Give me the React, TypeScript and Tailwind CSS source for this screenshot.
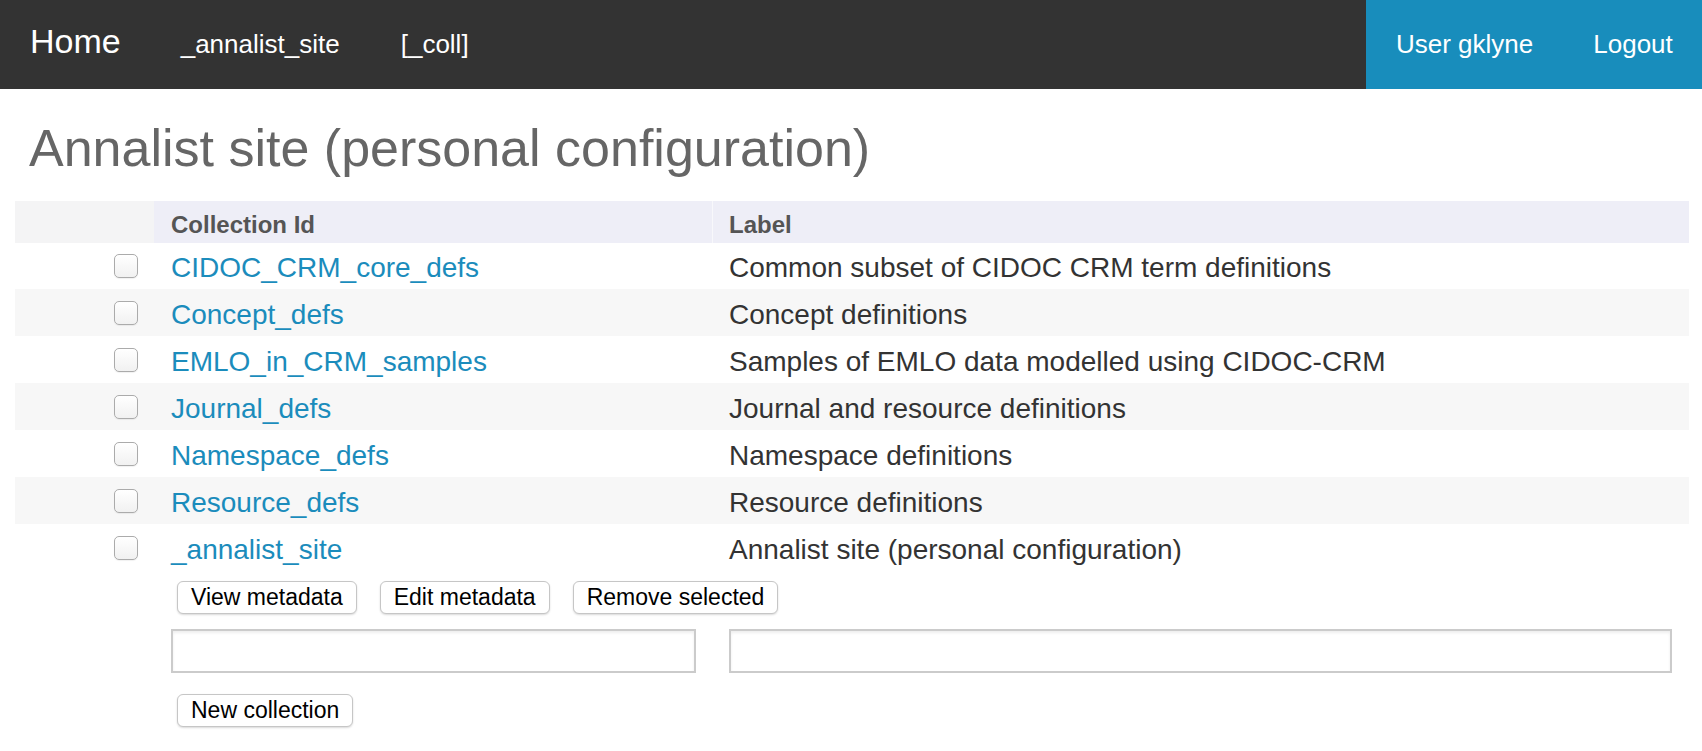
import React from 'react';

const ROWS = [
  { id: 'CIDOC_CRM_core_defs', label: 'Common subset of CIDOC CRM term definitions' },
  { id: 'Concept_defs', label: 'Concept definitions' },
  { id: 'EMLO_in_CRM_samples', label: 'Samples of EMLO data modelled using CIDOC-CRM' },
  { id: 'Journal_defs', label: 'Journal and resource definitions' },
  { id: 'Namespace_defs', label: 'Namespace definitions' },
  { id: 'Resource_defs', label: 'Resource definitions' },
  { id: '_annalist_site', label: 'Annalist site (personal configuration)' },
];

const Button = ({ children }: { children: React.ReactNode }) => (
  <button
    type="button"
    className="h-[33px] rounded-[6px] border border-[#c6c6c6] bg-white px-[13px] text-[23px] leading-none text-black shadow-[0_1px_2px_rgba(0,0,0,0.15)]"
  >
    {children}
  </button>
);

const Checkbox = () => (
  <input
    type="checkbox"
    className="h-[24px] w-[24px] appearance-none rounded-[5px] border border-[#ababab] bg-gradient-to-b from-white to-[#f1f1f1] shadow-[0_1px_1px_rgba(0,0,0,0.06)]"
  />
);

export default function App() {
  return (
    <div className="min-h-screen bg-white font-['Liberation_Sans',Arial,sans-serif]">
      <nav className="flex h-[89px] bg-[#333333]">
        <div className="flex flex-1 items-baseline pl-[30px] pt-[24px] text-white">
          <a className="text-[34px] leading-none">Home</a>
          <a className="ml-[60px] text-[26px] leading-none">_annalist_site</a>
          <a className="ml-[61px] text-[26px] leading-none">[_coll]</a>
        </div>
        <div className="flex w-[336px] items-baseline bg-[#188dbc] pl-[30px] pt-[31px] text-white">
          <a className="text-[26px] leading-none">User gklyne</a>
          <a className="ml-[60px] text-[26px] leading-none">Logout</a>
        </div>
      </nav>

      <h1 className="ml-[29px] mt-[31px] mb-[24px] text-[52px] leading-[1.1] text-[#666666]">
        Annalist site (personal configuration)
      </h1>

      <div className="ml-[15px] mr-[13px]">
        <div className="grid h-[41px] grid-cols-[139px_559px_1fr] text-[24px] font-bold text-[#555555]">
          <div className="bg-[#f4f4f5]" />
          <div className="flex items-center border-r border-[#f8f8fb] bg-[#eeeef7] pl-[17px] pt-[6px]">
            Collection Id
          </div>
          <div className="flex items-center bg-[#eeeef7] pl-[16px] pt-[6px]">Label</div>
        </div>

        {ROWS.map((r, i) => (
          <div
            key={r.id}
            className={`grid h-[47px] grid-cols-[139px_559px_1fr] text-[28px] ${
              i % 2 === 1 ? 'bg-[#f7f7f7]' : 'bg-white'
            }`}
          >
            <div className="flex items-center justify-end pr-[16px]">
              <Checkbox />
            </div>
            <div className="flex items-center pl-[17px] pt-[4px]">
              <a className="leading-none text-[#1b8cbc]">{r.id}</a>
            </div>
            <div className="flex items-center pl-[16px] pt-[4px] leading-none text-[#333333]">
              {r.label}
            </div>
          </div>
        ))}

        <div className="mt-[10px] flex gap-[23px] pl-[162px]">
          <Button>View metadata</Button>
          <Button>Edit metadata</Button>
          <Button>Remove selected</Button>
        </div>

        <div className="mt-[15px] grid grid-cols-[139px_559px_1fr]">
          <div />
          <div className="px-[17px]">
            <input
              type="text"
              className="block h-[44px] w-full border-2 border-[#cbcbcb] bg-white shadow-[inset_0_2px_3px_rgba(0,0,0,0.07)] outline-none"
            />
          </div>
          <div className="pl-[16px] pr-[17px]">
            <input
              type="text"
              className="block h-[44px] w-full border-2 border-[#cbcbcb] bg-white shadow-[inset_0_2px_3px_rgba(0,0,0,0.07)] outline-none"
            />
          </div>
        </div>

        <div className="mt-[21px] pl-[162px] pb-[25px]">
          <Button>New collection</Button>
        </div>
      </div>
    </div>
  );
}
